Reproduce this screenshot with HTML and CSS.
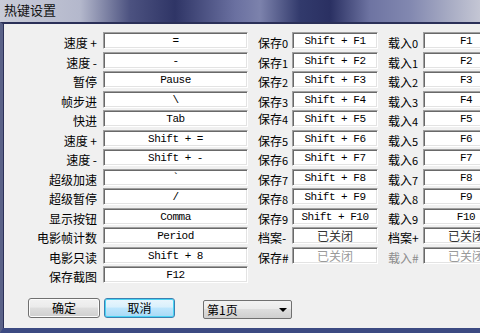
FILE: index.html
```html
<!DOCTYPE html>
<html>
<head>
    <title>热键设置</title>
    <meta charset="utf-8">
    <link rel="stylesheet" href="styles.css">
</head>
<body>
    <div class="window">
        <div class="titlebar">热键设置</div>
        <div class="frame">
            <div class="client">
                <div class="keys">
                    <!-- row 1 -->
                    <div class="label">速度 +</div><div class="box">=</div>
                    <div class="label2">保存<small>0</small></div><div class="box">Shift + F1</div>
                    <div class="label2">载入<small>0</small></div><div class="box">F1</div>
                    <!-- row 2 -->
                    <div class="label">速度 -</div><div class="box">-</div>
                    <div class="label2">保存<small>1</small></div><div class="box">Shift + F2</div>
                    <div class="label2">载入<small>1</small></div><div class="box">F2</div>
                    <!-- row 3 -->
                    <div class="label">暂停</div><div class="box">Pause</div>
                    <div class="label2">保存<small>2</small></div><div class="box">Shift + F3</div>
                    <div class="label2">载入<small>2</small></div><div class="box">F3</div>
                    <!-- row 4 -->
                    <div class="label">帧步进</div><div class="box">\</div>
                    <div class="label2">保存<small>3</small></div><div class="box">Shift + F4</div>
                    <div class="label2">载入<small>3</small></div><div class="box">F4</div>
                    <!-- row 5 -->
                    <div class="label">快进</div><div class="box">Tab</div>
                    <div class="label2 up">保存<small>4</small></div><div class="box">Shift + F5</div>
                    <div class="label2">载入<small>4</small></div><div class="box">F5</div>
                    <!-- row 6 -->
                    <div class="label">速度 +</div><div class="box">Shift + =</div>
                    <div class="label2">保存<small>5</small></div><div class="box">Shift + F6</div>
                    <div class="label2">载入<small>5</small></div><div class="box">F6</div>
                    <!-- row 7 -->
                    <div class="label">速度 -</div><div class="box">Shift + -</div>
                    <div class="label2">保存<small>6</small></div><div class="box">Shift + F7</div>
                    <div class="label2">载入<small>6</small></div><div class="box">F7</div>
                    <!-- row 8 -->
                    <div class="label">超级加速</div><div class="box">`</div>
                    <div class="label2">保存<small>7</small></div><div class="box">Shift + F8</div>
                    <div class="label2">载入<small>7</small></div><div class="box">F8</div>
                    <!-- row 9 -->
                    <div class="label">超级暂停</div><div class="box">/</div>
                    <div class="label2">保存<small>8</small></div><div class="box">Shift + F9</div>
                    <div class="label2">载入<small>8</small></div><div class="box">F9</div>
                    <!-- row 10 -->
                    <div class="label">显示按钮</div><div class="box">Comma</div>
                    <div class="label2">保存<small>9</small></div><div class="box">Shift + F10</div>
                    <div class="label2">载入<small>9</small></div><div class="box">F10</div>
                    <!-- row 11 -->
                    <div class="label">电影帧计数</div><div class="box">Period</div>
                    <div class="label2">档案-</div><div class="box cjk">已关闭</div>
                    <div class="label2">档案+</div><div class="box cjk">已关闭</div>
                    <!-- row 12 -->
                    <div class="label">电影只读</div><div class="box">Shift + 8</div>
                    <div class="label2">保存#</div><div class="box cjk off">已关闭</div>
                    <div class="label2 off">载入#</div><div class="box cjk off">已关闭</div>
                    <!-- row 13 -->
                    <div class="label">保存截图</div><div class="box">F12</div>
                </div>

                <div class="actions">
                    <button class="btn">确定</button>
                    <button class="btn focused">取消</button>
                    <div class="combo">
                        <span>第1页</span>
                        <span class="arrow"></span>
                    </div>
                </div>
            </div>
        </div>
    </div>
</body>
</html>
```

FILE: styles.css
```css
body {
    margin: 0;
    width: 480px;
    height: 333px;
    overflow: hidden;
    font-family: "Noto Sans CJK SC", "Noto Sans", sans-serif;
    font-size: 12px;
    color: #000;
    background-color: #3a4070;
}

.window {
    width: 540px;
    height: 333px;
    display: flex;
    flex-direction: column;
}

/* Aero glass title bar */
.titlebar {
    height: 22px;
    line-height: 20px;
    padding-left: 4px;
    font-size: 13px;
    color: #111;
    background: linear-gradient(90deg,
        #c9ccd8 0px, #b4b8cc 80px, #4c5280 130px, #2f3566 175px,
        #6a70a0 235px, #7c82ac 260px, #323a6c 300px, #2a3062 330px,
        #6e74a2 370px, #8288b0 410px, #a8acc4 450px, #c4c6d4 480px);
}

.frame {
    flex: 1;
    border-top: 2px solid #2b3058;
    border-left: 3px solid #5a6288;
    border-bottom: 5px solid #3c4a82;
    background-color: #f0f0f0;
    box-shadow: inset 1px 0 #2b3058;
}

.client {
    padding-top: 8px;
    display: flex;
    flex-direction: column;
}

.keys {
    display: grid;
    grid-template-columns: 100px 145px 44px 86px 45px 86px;
    grid-auto-rows: 19.5px;
}

.label {
    text-align: right;
    padding-right: 6px;
    padding-top: 2px;
    line-height: 17px;
    white-space: pre;
}

.label2 {
    padding-left: 10px;
    padding-top: 2px;
    line-height: 17px;
    white-space: nowrap;
}

.label2.up {
    padding-top: 0;
}

.label2 small {
    font-size: 11px;
}

.off {
    color: #8c8c8c;
}

.box {
    height: 17px;
    box-sizing: border-box;
    background-color: #fff;
    border: 1px solid;
    border-color: #a0a0a0 #fff #fff #a0a0a0;
    box-shadow: inset 1px 1px #696969, inset -1px -1px #e3e3e3;
    text-align: center;
    font-family: "Liberation Mono", "DejaVu Sans Mono", monospace;
    font-size: 11px;
    letter-spacing: -0.5px;
    line-height: 17px;
    white-space: pre;
    overflow: hidden;
}

.box.cjk {
    font-family: "Noto Sans CJK SC", sans-serif;
    font-size: 12px;
    letter-spacing: 0;
    line-height: 16px;
    color: #333;
}

.box.off {
    color: #9a9a9a;
}

.actions {
    display: flex;
    align-items: flex-start;
    margin-top: 12px;
    padding-left: 25px;
}

.btn {
    width: 72px;
    height: 20px;
    margin-right: 4px;
    padding: 0;
    font-family: "Noto Sans CJK SC", sans-serif;
    font-size: 12px;
    color: #000;
    border: 1px solid #707070;
    border-radius: 3px;
    background: linear-gradient(#f2f2f2 0%, #ebebeb 45%, #dddddd 50%, #cfcfcf 100%);
    box-shadow: inset 0 0 0 1px #fcfcfc;
}

.btn.focused {
    width: 71px;
    border-color: #3c7fb1;
    background: linear-gradient(#eaf6fd 0%, #d9f0fc 45%, #bee6fd 50%, #a7d9f5 100%);
    box-shadow: inset 0 0 0 1px #48d4f4;
}

.combo {
    margin-left: 24px;
    margin-top: 2px;
    width: 89px;
    height: 19px;
    box-sizing: border-box;
    border: 1px solid #707070;
    border-radius: 2px;
    background: linear-gradient(#f2f2f2 0%, #ebebeb 45%, #dddddd 50%, #cfcfcf 100%);
    display: flex;
    align-items: center;
    justify-content: space-between;
    padding: 0 4px 0 3px;
    line-height: 17px;
}

.arrow {
    width: 0;
    height: 0;
    border-left: 4px solid transparent;
    border-right: 4px solid transparent;
    border-top: 4px solid #000;
    margin-top: 2px;
}
```
